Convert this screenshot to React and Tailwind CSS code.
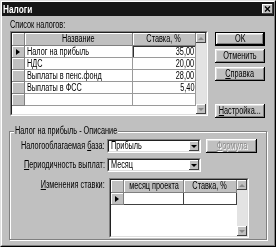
import React from "react";

const F = "font-['Liberation_Sans','Arial',sans-serif]";
const RAISED =
  "bg-[#c0c0c0] shadow-[inset_-1px_-1px_0_#000,inset_1px_1px_0_#fff,inset_-2px_-2px_0_#808080,inset_2px_2px_0_#dfdfdf]";
const RAISED_SM =
  "bg-[#c0c0c0] shadow-[inset_-1px_-1px_0_#404040,inset_1px_1px_0_#fff]";
const HEAD =
  "bg-[#c0c0c0] border-r border-b border-r-[#808080] border-b-[#808080] shadow-[inset_1px_1px_0_#fff]";

function T({ children, a = "l", className = "" }) {
  const o = a === "l" ? "origin-left" : a === "r" ? "origin-right" : "origin-center";
  return <span className={`inline-block whitespace-nowrap scale-x-[0.73] ${o} ${className}`}>{children}</span>;
}

function TriRight() {
  return <span className="w-0 h-0 border-y-[3px] border-y-transparent border-l-[4px] border-l-black" />;
}
function TriDown({ gray }) {
  return (
    <span
      className={
        gray
          ? "w-0 h-0 border-x-[3px] border-x-transparent border-t-[3px] border-t-[#8a8a8a]"
          : "w-0 h-0 border-x-[3px] border-x-transparent border-t-[3px] border-t-black"
      }
    />
  );
}
function TriUp() {
  return <span className="w-0 h-0 border-x-[3px] border-x-transparent border-b-[3px] border-b-[#8a8a8a]" />;
}

function Sunken({ className, children }) {
  return (
    <div className={`border border-t-[#808080] border-l-[#808080] border-r-white border-b-white ${className}`}>
      <div className="w-full h-full border border-t-[#202020] border-l-[#202020] border-r-[#dfdfdf] border-b-[#dfdfdf] bg-white">
        {children}
      </div>
    </div>
  );
}

function Btn({ children, className }) {
  return (
    <div className={`flex items-center justify-center w-[50px] h-[14px] ${RAISED} ${className}`}>
      <T a="c">{children}</T>
    </div>
  );
}

function VScroll() {
  return (
    <div className="w-[10px] h-full flex flex-col bg-[#e3e3e3]">
      <div className={`w-[10px] h-[10px] flex items-center justify-center ${RAISED_SM}`}>
        <TriUp />
      </div>
      <div className="flex-1" />
      <div className={`w-[10px] h-[10px] flex items-center justify-center ${RAISED_SM}`}>
        <TriDown gray />
      </div>
    </div>
  );
}

function Combo({ value }) {
  return (
    <Sunken className="w-[94px] h-[14px]">
      <div className="flex items-center h-full">
        <span className="flex-1 pl-[2px] leading-[10px]">
          <T>{value}</T>
        </span>
        <div className={`w-[10px] h-[10px] flex items-center justify-center ${RAISED_SM}`}>
          <TriDown />
        </div>
      </div>
    </Sunken>
  );
}

const rows = [
  ["Налог на прибыль", "35,00"],
  ["НДС", "20,00"],
  ["Выплаты в пенс.фонд", "28,00"],
  ["Выплаты в ФСС", "5,40"],
  ["", ""],
];

export default function App() {
  return (
    <div
      className={`w-[276px] h-[247px] overflow-hidden bg-[#c0c0c0] border border-t-[#dfdfdf] border-l-[#dfdfdf] border-r-black border-b-black ${F} text-[10px] leading-[10px] text-black`}
    >
      <div className="h-full flex flex-col border border-t-white border-l-white border-r-[#808080] border-b-[#808080]">
        {/* title bar */}
        <div className="h-[14px] bg-[#161616] flex items-center justify-between pl-[1px] pr-[1px]">
          <span className="inline-block whitespace-nowrap origin-left scale-x-[0.75] text-white font-bold text-[11px] leading-[12px]">
            Налоги
          </span>
          <div className={`w-[11px] h-[10px] flex items-center justify-center ${RAISED_SM}`}>
            <svg width="7" height="6" viewBox="0 0 7 6">
              <path d="M1 0.5 L6 5.5 M6 0.5 L1 5.5" stroke="#000" strokeWidth="1.4" />
            </svg>
          </div>
        </div>

        <div className="mt-[4px] ml-[8px] h-[10px]">
          <T>Список налогов:</T>
        </div>

        <div className="mt-[1px] ml-[8px] flex items-start">
          <Sunken className="w-[198px] h-[85px]">
            <div className="flex h-full">
              <div className="w-[184px] flex flex-col">
                <div className="flex h-[13px]">
                  <div className={`w-[13px] h-full ${HEAD}`} />
                  <div className={`w-[108px] h-full flex items-center justify-center ${HEAD}`}>
                    <T a="c">Название</T>
                  </div>
                  <div className={`w-[63px] h-full flex items-center justify-center ${HEAD}`}>
                    <T a="c">Ставка, %</T>
                  </div>
                </div>
                {rows.map(([n, v], i) => (
                  <div key={i} className="flex h-[12px]">
                    <div className={`w-[13px] h-full flex items-center justify-center ${HEAD}`}>
                      {i === 0 ? <TriRight /> : null}
                    </div>
                    <div className="w-[108px] h-full flex items-center pl-[2px] border-r border-b border-r-[#9a9a9a] border-b-[#9a9a9a]">
                      <T>{n}</T>
                    </div>
                    <div
                      className={
                        i === 0
                          ? "w-[63px] h-full flex items-center justify-end pr-[1px] border-r border-b border-r-[#9a9a9a] border-b-[#9a9a9a] shadow-[inset_1px_1px_0_#303030]"
                          : "w-[63px] h-full flex items-center justify-end pr-[1px] border-r border-b border-r-[#9a9a9a] border-b-[#9a9a9a]"
                      }
                    >
                      <T a="r">{v}</T>
                    </div>
                  </div>
                ))}
              </div>
              <VScroll />
            </div>
          </Sunken>

          <div className="ml-[7px] mt-[1px] flex flex-col">
            <div className="w-[50px] h-[14px] border border-black">
              <div className={`w-full h-full flex items-center justify-center ${RAISED}`}>
                <T a="c">OK</T>
              </div>
            </div>
            <Btn className="mt-[3px]">Отменить</Btn>
            <Btn className="mt-[4px]">
              <span className="underline">С</span>правка
            </Btn>
            <Btn className="mt-[23px]">
              <span className="underline">Н</span>астройка...
            </Btn>
          </div>
        </div>

        {/* group box */}
        <div className="mt-[13px] mx-[7px] mb-[5px] flex-1 flex flex-col border border-[#808080] shadow-[inset_1px_1px_0_#fff,1px_1px_0_#fff]">
          <div className="-mt-[6px] ml-[4px] w-[104px] pl-[1px] h-[10px] bg-[#c0c0c0]">
            <T>Налог на прибыль - Описание</T>
          </div>

          <div className="mt-[3px] flex items-center h-[14px]">
            <div className="w-[95px] flex justify-end">
              <T a="r">
                Налогооблагаемая <span className="underline">б</span>аза:
              </T>
            </div>
            <div className="ml-[2px]">
              <Combo value="Прибыль" />
            </div>
            <div
              className={`ml-[5px] w-[51px] h-[14px] flex items-center justify-center text-[#8a8a8a] [text-shadow:1px_1px_0_#fff] ${RAISED}`}
            >
              <T a="c">
                <span className="underline">Ф</span>ормула
              </T>
            </div>
          </div>

          <div className="mt-[5px] flex items-center h-[14px]">
            <div className="w-[95px] flex justify-end">
              <T a="r">
                <span className="underline">П</span>ериодичность выплат:
              </T>
            </div>
            <div className="ml-[2px]">
              <Combo value="Месяц" />
            </div>
          </div>

          <div className="mt-[6px] flex items-start">
            <div className="w-[95px] flex justify-end pt-[2px]">
              <T a="r">
                <span className="underline">И</span>зменения ставки:
              </T>
            </div>
            <Sunken className="ml-[4px] w-[140px] h-[60px]">
              <div className="flex h-full">
                <div className="w-[126px] flex flex-col">
                  <div className="flex h-[13px]">
                    <div className={`w-[13px] h-full ${HEAD}`} />
                    <div className={`w-[60px] h-full flex items-center justify-center ${HEAD}`}>
                      <T a="c">месяц проекта</T>
                    </div>
                    <div className={`w-[53px] h-full flex items-center justify-center ${HEAD}`}>
                      <T a="c">Ставка, %</T>
                    </div>
                  </div>
                  <div className="flex h-[12px]">
                    <div className={`w-[13px] h-full flex items-center justify-center ${HEAD}`}>
                      <TriRight />
                    </div>
                    <div className="w-[60px] h-full border-r border-b border-r-[#404040] border-b-[#404040]" />
                    <div className="w-[53px] h-full border-r border-b border-r-[#404040] border-b-[#404040]" />
                  </div>
                </div>
                <VScroll />
              </div>
            </Sunken>
          </div>
        </div>
      </div>
    </div>
  );
}
